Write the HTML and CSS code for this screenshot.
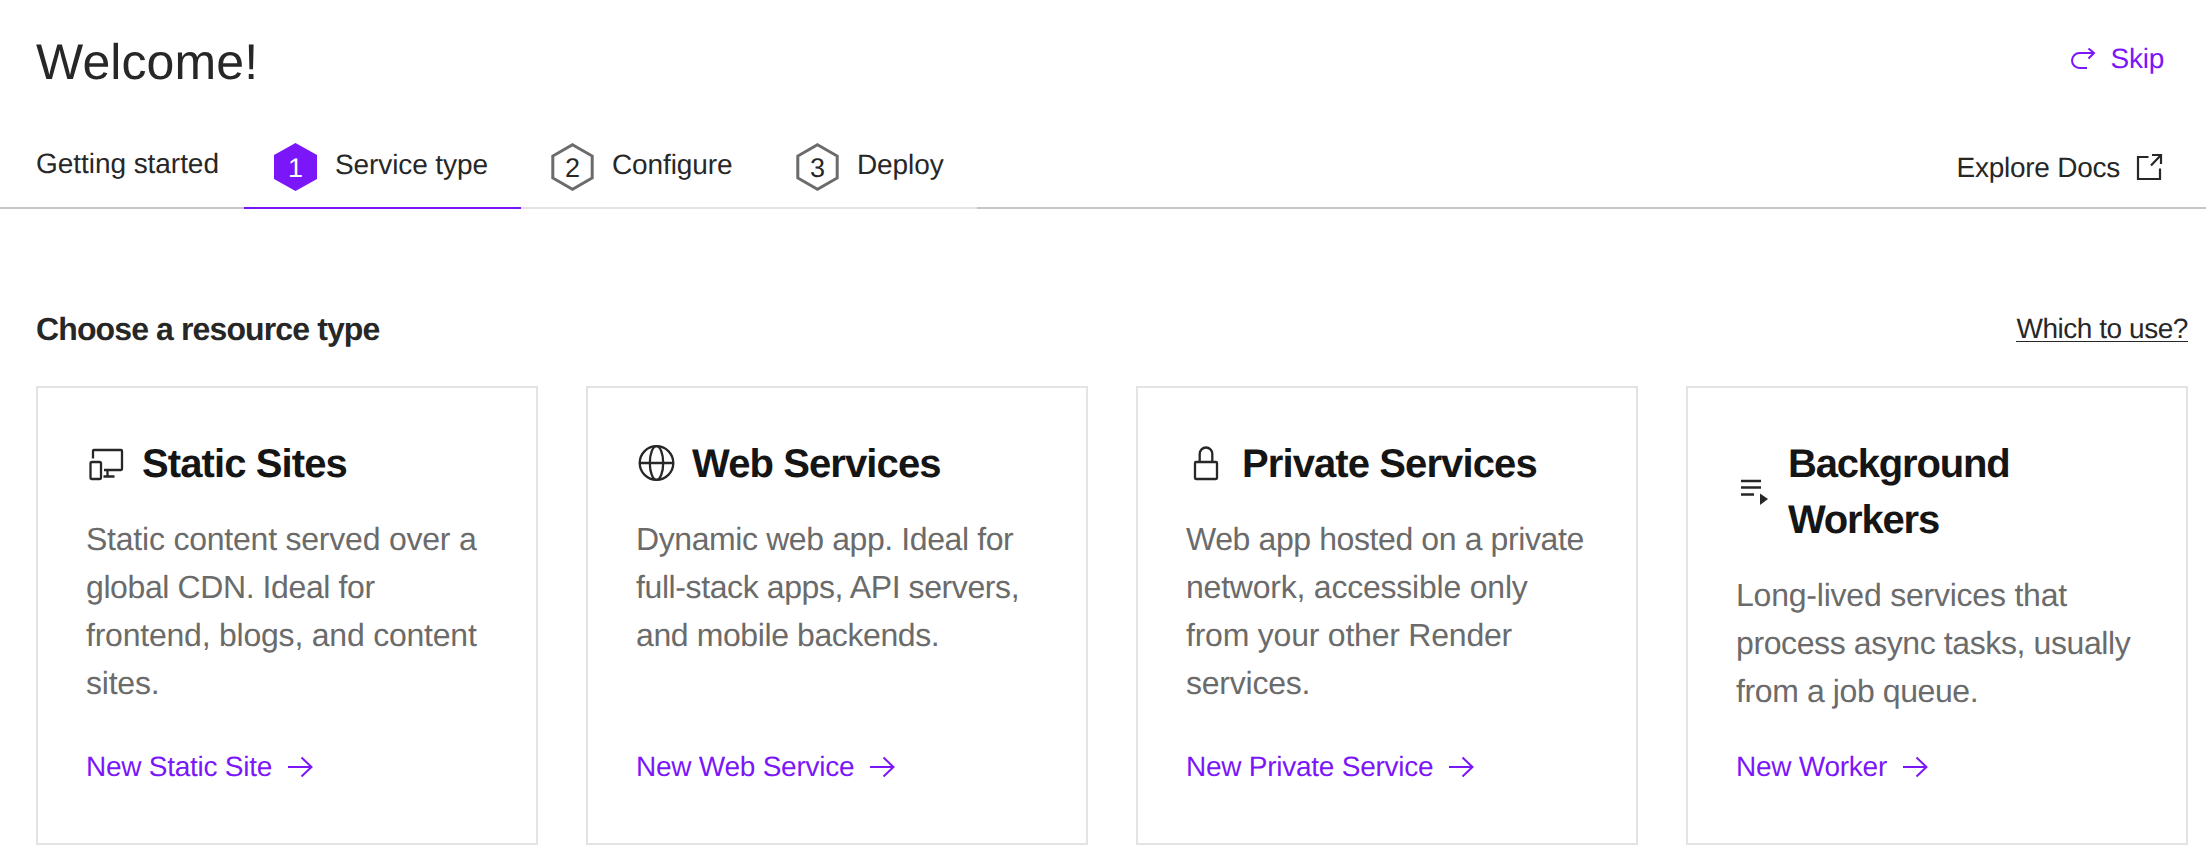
FILE: index.html
```html
<!DOCTYPE html>
<html lang="en">
<head>
<meta charset="utf-8">
<title>Welcome</title>
<link rel="stylesheet" href="styles.css">
</head>
<body>
<header class="header">
  <h1 class="header-title">Welcome!</h1>
  <a class="skip">
    <svg class="skip-icon" width="26" height="22" viewBox="0 0 26 22"><path d="M17 20H9.500a7.500 7.500 0 0 1 0-15H24M18.500 0.500l5.500 4.500-5.500 5.500"/></svg>
    <span>Skip</span>
  </a>
</header>
<nav class="steps">
  <span class="steps-start">Getting started</span>
  <div class="step step-active">
    <svg class="hex hex-filled" width="43" height="48" viewBox="0 0 43 48"><path d="M21.500 0L43 12v24L21.500 48 0 36V12z"/><text x="21.500" y="34">1</text></svg>
    <span>Service type</span>
  </div>
  <div class="step step-configure">
    <svg class="hex" width="43" height="48" viewBox="0 0 43 48"><path d="M21.500 1.800L41.200 13v22L21.500 46.200 1.800 35V13z"/><text x="21.500" y="34">2</text></svg>
    <span>Configure</span>
  </div>
  <div class="step step-deploy">
    <svg class="hex" width="43" height="48" viewBox="0 0 43 48"><path d="M21.500 1.800L41.200 13v22L21.500 46.200 1.800 35V13z"/><text x="21.500" y="34">3</text></svg>
    <span>Deploy</span>
  </div>
  <a class="docs">
    <span>Explore Docs</span>
    <svg class="docs-icon" width="27" height="27" viewBox="0 0 27 27"><path d="M12.500 3H2v22h22V14.500M16 1h9v9M25 1L15 11.500"/></svg>
  </a>
</nav>
<main class="main">
  <div class="section-head">
    <h2 class="section-title">Choose a resource type</h2>
    <a class="which">Which to use?</a>
  </div>
  <div class="cards">
    <article class="card">
      <h3 class="card-title">
        <svg class="card-icon" width="40" height="40" viewBox="0 0 40 40"><path d="M7 15.500V8q0-1 1-1h27q1 0 1 1v18q0 1-1 1H18M21.500 27v6.500M17.500 33.500h11"/><rect x="4.500" y="19" width="10.500" height="17" rx="1.500"/></svg>
        <span>Static Sites</span>
      </h3>
      <p class="card-text">Static content served over a<br><span class="tight">global CDN. Ideal for</span><br>frontend, blogs, and content<br>sites.</p>
      <a class="card-link"><span>New Static Site</span><svg class="arrow" width="25" height="22" viewBox="0 0 25 22"><path d="M0 11h23.500M13.500 1.500L23.500 11l-10 9.500"/></svg></a>
    </article>
    <article class="card">
      <h3 class="card-title">
        <svg class="card-icon" width="40" height="40" viewBox="0 0 40 40"><circle cx="20.500" cy="20" r="16.800"/><ellipse cx="20.500" cy="20" rx="6.700" ry="16.800"/><path d="M3.700 20h33.600"/></svg>
        <span>Web Services</span>
      </h3>
      <p class="card-text tight">Dynamic web app. Ideal for<br>full-stack apps, API servers,<br>and mobile backends.</p>
      <a class="card-link"><span>New Web Service</span><svg class="arrow" width="25" height="22" viewBox="0 0 25 22"><path d="M0 11h23.500M13.500 1.500L23.500 11l-10 9.500"/></svg></a>
    </article>
    <article class="card">
      <h3 class="card-title">
        <svg class="card-icon" width="40" height="40" viewBox="0 0 40 40"><rect x="9" y="19" width="22" height="17" rx="1"/><path d="M13.700 19v-8.200a6.300 6.300 0 0 1 12.600 0V19"/></svg>
        <span>Private Services</span>
      </h3>
      <p class="card-text"><span class="tight">Web app hosted on a private</span><br>network, accessible only<br>from your other Render<br>services.</p>
      <a class="card-link"><span>New Private Service</span><svg class="arrow" width="25" height="22" viewBox="0 0 25 22"><path d="M0 11h23.500M13.500 1.500L23.500 11l-10 9.500"/></svg></a>
    </article>
    <article class="card">
      <h3 class="card-title card-title-long">
        <svg class="card-icon" width="36" height="36" viewBox="0 0 36 36"><path class="queue-lines" d="M5 8h20M5 14.500h20M5 21.500h13"/><path class="queue-play" d="M24 20.500l8 5.500-8 6z"/></svg>
        <span>Background<br>Workers</span>
      </h3>
      <p class="card-text">Long-lived services that<br><span class="tight">process async tasks, usually<br>from a job queue.</span></p>
      <a class="card-link"><span>New Worker</span><svg class="arrow" width="25" height="22" viewBox="0 0 25 22"><path d="M0 11h23.500M13.500 1.500L23.500 11l-10 9.500"/></svg></a>
    </article>
  </div>
</main>
</body>
</html>
```
FILE: styles.css
```css
* { box-sizing: border-box; }
html { overflow: hidden; }
body {
  margin: 0;
  background: #fff;
  color: #272727;
  font: 28px/40px "Liberation Sans", Arial, sans-serif;
  letter-spacing: -0.25px;
  text-rendering: geometricPrecision;
}
h1, h2, h3, p { margin: 0; }
svg { flex: none; fill: none; }

.header {
  display: flex;
  justify-content: space-between;
  align-items: flex-start;
  height: 127px;
  padding: 32px 42px 0 36px;
}
.header-title { font-size: 50px; line-height: 60px; font-weight: 400; letter-spacing: 0.1px; }
.skip { display: flex; align-items: center; gap: 15px; margin-top: 7px; color: #7b16f8; }
.skip-icon { stroke: #7b16f8; stroke-width: 2; }

.steps { display: flex; height: 82px; }
.steps-start {
  display: flex;
  align-items: center;
  width: 244px;
  padding: 0 0 6px 36px;
  border-bottom: 2px solid #c6c6c6;
  letter-spacing: -0.05px;
}
.step {
  display: flex;
  align-items: center;
  gap: 18px;
  padding-left: 30px;
  border-bottom: 2px solid #e3e3e3;
  letter-spacing: -0.1px;
}
.step span { padding-bottom: 4px; }
.step-active { width: 277px; border-color: #7b16f8; }
.step-configure { width: 245px; }
.step-deploy { width: 211px; }
.hex path { stroke: #6b6b6b; stroke-width: 3; }
.hex text { fill: #272727; font-size: 27px; text-anchor: middle; letter-spacing: 0; }
.hex.hex-filled path { fill: #7b16f8; stroke: none; }
.hex.hex-filled text { fill: #fff; }
.docs {
  display: flex;
  flex: 1;
  align-items: center;
  justify-content: flex-end;
  gap: 16px;
  padding: 1px 43px 0 0;
  border-bottom: 2px solid #c6c6c6;
}
.docs-icon { stroke: #272727; stroke-width: 2.2; }

.main { padding: 100px 18px 0 36px; }
.section-head { display: flex; justify-content: space-between; height: 77px; }
.section-title { font-size: 32px; line-height: 40px; letter-spacing: -0.88px; }
.which {
  height: 33px;
  line-height: 40px;
  letter-spacing: -0.45px;
  border-bottom: 1px solid #272727;
}

.cards { display: grid; grid-template-columns: repeat(4, minmax(0, 1fr)); gap: 48px; }
.card {
  display: flex;
  flex-direction: column;
  height: 459px;
  padding: 48px;
  border: 2px solid #e3e3e3;
}
.card-title {
  display: flex;
  align-items: center;
  gap: 16px;
  color: #151515;
  font-size: 40px;
  line-height: 56px;
  letter-spacing: -0.9px;
}
.card-title-long { letter-spacing: -1.2px; }
.card-icon { margin-bottom: 2px; stroke: #272727; stroke-width: 2.3; }
.card-icon .queue-lines { stroke-width: 2.6; }
.card-icon .queue-play { fill: #272727; stroke: none; }
.card-text {
  margin-top: 23px;
  color: #6b6b6b;
  font-size: 32px;
  line-height: 48px;
  letter-spacing: -0.22px;
  white-space: nowrap;
}
.tight { letter-spacing: -0.4px; }
.card-link {
  display: flex;
  align-items: center;
  gap: 16px;
  height: 56px;
  margin-top: auto;
  color: #7b16f8;
}
.arrow { stroke: #7b16f8; stroke-width: 2; }
```
